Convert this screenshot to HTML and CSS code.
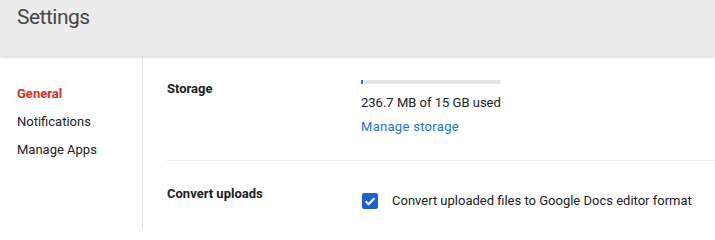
FILE: index.html
```html
<!DOCTYPE html>
<html>
<head>
<meta charset="utf-8">
<link rel="stylesheet" href="styles.css">
</head>
<body>
<header class="topbar">
  <h1 class="title">Settings</h1>
</header>
<div class="layout">
  <nav class="sidebar">
    <a class="nav-item active">General</a>
    <a class="nav-item">Notifications</a>
    <a class="nav-item">Manage Apps</a>
  </nav>
  <main class="main">
    <section class="row storage">
      <div class="label">Storage</div>
      <div class="content">
        <div class="bar"><span class="bar-used"></span><span class="bar-rest"></span></div>
        <div class="usage">236.7 MB of 15 GB used</div>
        <a class="link">Manage storage</a>
      </div>
    </section>
    <section class="row convert">
      <div class="label">Convert uploads</div>
      <div class="content">
        <label class="check">
          <span class="box"><svg viewBox="0 0 16 16" width="16" height="16"><path d="M3.6 8.2l3 3 5.8-6" fill="none" stroke="#fff" stroke-width="2"/></svg></span>
          <span class="check-text">Convert uploaded files to Google Docs editor format</span>
        </label>
      </div>
    </section>
  </main>
</div>
</body>
</html>
```

FILE: styles.css
```css
html, body {
  margin: 0;
  padding: 0;
  background: #fff;
}
body {
  font-family: Roboto, "Liberation Sans", sans-serif;
  font-size: 13px;
  color: #202124;
  overflow: hidden;
}
.topbar {
  height: 56px;
  background: #ececec;
  box-shadow: 0 1px 3px rgba(0,0,0,0.18);
  position: relative;
  z-index: 1;
  box-sizing: border-box;
}
.title {
  margin: 0;
  padding: 3px 0 0 17px;
  font-size: 21px;
  letter-spacing: -0.5px;
  line-height: 28px;
  font-weight: 400;
  color: #444746;
}
.layout {
  display: flex;
  height: 173px;
}
.sidebar {
  width: 143px;
  flex: none;
  border-right: 1px solid #e3e3e3;
  padding-top: 24px;
  box-sizing: border-box;
  display: flex;
  flex-direction: column;
}
.nav-item {
  padding-left: 17px;
  line-height: 28px;
  color: #202124;
}
.nav-item.active {
  color: #d93025;
  font-weight: 700;
}
.main {
  flex: 1;
  padding-left: 24px;
}
.row {
  display: flex;
}
.label {
  width: 194px;
  flex: none;
  font-weight: 700;
  line-height: 20px;
}
.storage {
  padding-top: 23px;
  padding-bottom: 23px;
  border-bottom: 1px solid #e8eaed;
}
.content {
  display: flex;
  flex-direction: column;
}
.bar {
  display: flex;
  width: 140px;
  height: 4px;
  margin-top: 1px;
  margin-bottom: 9px;
}
.bar-used {
  width: 2px;
  background: #1a73e8;
}
.bar-rest {
  flex: 1;
  margin-left: 1px;
  background: #e3e3e3;
  border-radius: 0 2px 2px 0;
}
.usage {
  line-height: 20px;
}
.link {
  margin-top: 4px;
  line-height: 20px;
  color: #1a73e8;
  letter-spacing: 0.3px;
}
.convert {
  padding-top: 23px;
}
.convert .content {
  padding-top: 7px;
}
.check {
  display: flex;
  align-items: center;
  height: 20px;
}
.box {
  width: 16px;
  height: 16px;
  border-radius: 2px;
  background: #1a62d1;
  display: flex;
  margin-left: 1px;
}
.check-text {
  margin-left: 14px;
  line-height: 20px;
}
```
